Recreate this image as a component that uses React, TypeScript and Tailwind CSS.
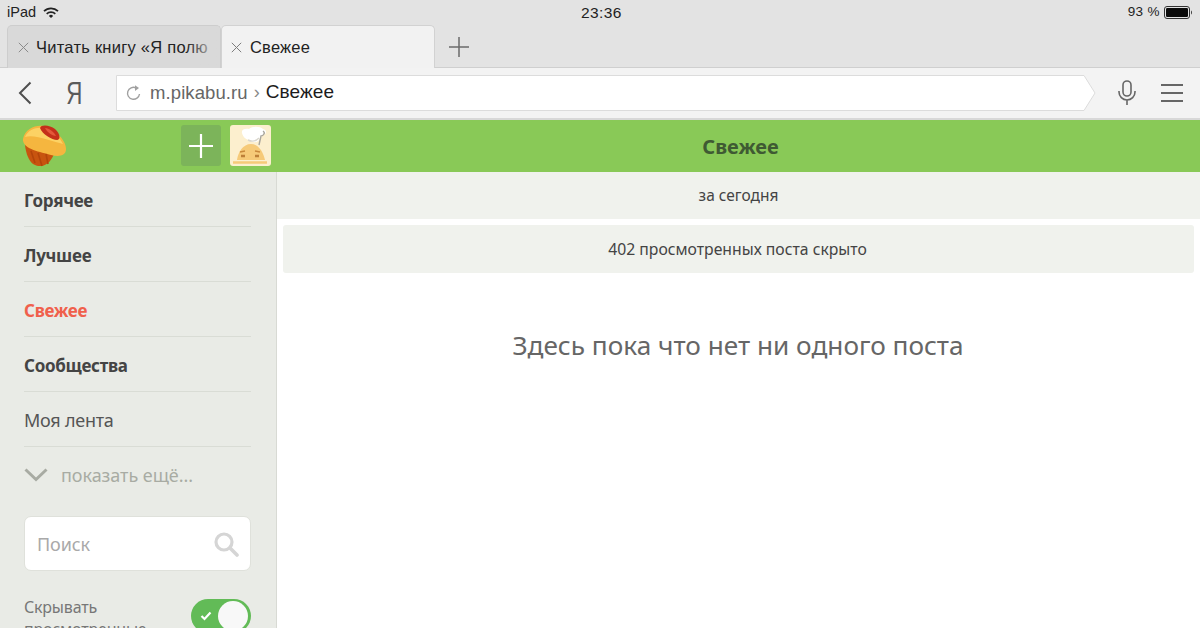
import React from "react";

const sys = { fontFamily: '"Liberation Sans", Arial, sans-serif' };

function Wifi() {
  return (
    <svg width="16" height="12" viewBox="0 0 16 12" className="ml-[7px]">
      <path d="M1 4.2 A10 10 0 0 1 15 4.2" fill="none" stroke="#222" strokeWidth="1.7" />
      <path d="M3.7 6.8 A6.2 6.2 0 0 1 12.3 6.8" fill="none" stroke="#222" strokeWidth="1.7" />
      <path d="M8 11 L5.9 8.9 A3 3 0 0 1 10.1 8.9 Z" fill="#222" />
    </svg>
  );
}

function Battery() {
  return (
    <svg width="29" height="13" viewBox="0 0 29 13" className="ml-[4px]">
      <rect x="0.5" y="0.5" width="25" height="12" rx="2.5" fill="none" stroke="#333" />
      <rect x="2" y="2" width="22" height="9" rx="1.2" fill="#0b0b0b" />
      <path d="M27 4.5 C28.2 4.8 28.2 8.2 27 8.5 Z" fill="#333" />
    </svg>
  );
}

function TabX({ c }: { c: string }) {
  return (
    <svg width="11" height="11" viewBox="0 0 11 11" className="shrink-0">
      <path d="M0.8 0.8 L10.2 10.2 M10.2 0.8 L0.8 10.2" stroke={c} strokeWidth="1" />
    </svg>
  );
}

function Muffin() {
  return (
    <svg width="44" height="42" viewBox="0 0 44 42">
      <path d="M2 20 C3 29 6 36 10 39 C16 43 26 42 31 29 Z" fill="#c8540f" />
      <path d="M8 26 L12 38 M15 28 L19 41 M23 29 L25 39" stroke="#b4450a" strokeWidth="1.6" fill="none" />
      <path d="M0 14 C2 4 12 0 20 1 C30 3 43 14 43 24 C43 31 36 32 28 30 C17 27 -1 24 0 14 Z" fill="#f5b63f" />
      <path d="M2 12 C5 5 13 2 20 3 C28 5 37 12 40 19 C30 17 12 9 2 12 Z" fill="#fcd264" />
      <path d="M17 3 C18 -1 27 0 32 4 C37 8 38 15 34 15 C29 15 19 9 17 3 Z" fill="#c4301a" />
      <path d="M22 3 C26 3 31 7 33 11 C29 11 24 7 22 3 Z" fill="#e4583a" />
    </svg>
  );
}

function Chef() {
  return (
    <div className="w-[41px] h-[41px] rounded-[3px] bg-[#fcefce] ml-[9px] overflow-hidden">
      <svg width="41" height="41" viewBox="0 0 41 41">
        <path d="M7 35 C8 27 13 19 21 19 C28 19 33 26 35 35 Z" fill="#f6ca78" />
        <path d="M3 37.5 H37" stroke="#f6ca78" strokeWidth="2.4" />
        <path d="M12 8 C11 4 16 3 19 4 C22 1 30 1 33 4 C37 5 37 9 33 10 L29 15 C27 18 22 18 20 15 C16 15 13 12 12 8 Z" fill="#ffffff" />
        <path d="M33 6 C36 8 33 11 31 11 L29 20" fill="none" stroke="#a9a69c" strokeWidth="1.4" />
        <path d="M18 15 C22 17 26 16 29 13" fill="none" stroke="#d9d6cb" strokeWidth="1.4" />
        <path d="M10 27 L15 26 M25 26 L30 27" stroke="#c9893b" strokeWidth="1.3" />
        <path d="M11 31 H15 M25 31 H29" stroke="#bd8038" strokeWidth="2.6" />
      </svg>
    </div>
  );
}

function NavItem({ label, cls }: { label: string; cls: string }) {
  return (
    <div className="h-[55px] border-b border-[#d9dcd5] flex items-center">
      <span className={cls}>{label}</span>
    </div>
  );
}

export default function App() {
  return (
    <div
      className="w-[1200px] h-[628px] overflow-hidden flex flex-col bg-white"
      style={{ fontFamily: '"Noto Sans", "Open Sans", sans-serif' }}
    >
      {/* Status bar */}
      <div className="h-[25px] bg-[#e3e3e3] flex items-center justify-between pl-[7px] pr-[7px] text-[14.5px] text-[#222] relative" style={sys}>
        <div className="flex items-center">
          <span>iPad</span>
          <Wifi />
        </div>
        <span className="absolute left-[581px] top-[1px] text-[15.5px] tracking-[0.4px]">23:36</span>
        <div className="flex items-center">
          <span className="text-[13.5px] tracking-[0.4px]">93 %</span>
          <Battery />
        </div>
      </div>

      {/* Tabs */}
      <div className="h-[43px] bg-[#e3e3e3] border-b border-[#cfcfcf] flex items-end pl-[7px]" style={sys}>
        <div className="w-[214px] h-[43px] mb-[-1px] bg-[#d9d9d9] border border-[#cdcdcd] border-b-0 rounded-t-[5px] flex items-center pl-[10px] overflow-hidden relative">
          <TabX c="#8a8a8a" />
          <span className="ml-[7px] text-[16.5px] text-[#222] whitespace-nowrap tracking-[0.25px]">Читать книгу «Я полю</span>
          <div className="absolute right-0 top-0 bottom-0 w-[34px] bg-gradient-to-r from-transparent to-[#d9d9d9]" />
        </div>
        <div className="w-[214px] h-[43px] mb-[-1px] bg-[#f2f2f2] border border-[#d2d2d2] border-b-0 rounded-t-[5px] flex items-center pl-[9px]">
          <TabX c="#7d7d7d" />
          <span className="ml-[8px] mt-[1px] text-[16.5px] text-[#222] tracking-[0.2px]">Свежее</span>
        </div>
        <svg width="22" height="22" viewBox="0 0 22 22" className="ml-[13px] mb-[9px]">
          <path d="M11 1 V21 M1 11 H21" stroke="#6b6b6b" strokeWidth="1.5" />
        </svg>
      </div>

      {/* Toolbar */}
      <div className="h-[52px] bg-[#f3f3f3] border-b-2 border-[#d8d8d8] flex items-center" style={sys}>
        <svg width="14" height="24" viewBox="0 0 14 24" className="ml-[18px] shrink-0">
          <path d="M12.5 1.5 L2 12 L12.5 22.5" fill="none" stroke="#4e4e4e" strokeWidth="2" />
        </svg>
        <span className="ml-[32px] w-[16px] text-[31px] text-[#5a5a5a] leading-none font-light scale-x-[0.72]">Я</span>
        <div className="ml-[36px] w-[970px] h-[36px] relative flex items-center pl-[10px] mt-[-1px]">
          <svg className="absolute inset-0" width="980" height="36" viewBox="0 0 980 36">
            <path d="M0.5 0.5 H968 L979 18 L968 35.5 H0.5 Z" fill="#fff" stroke="#dcdcdc" />
          </svg>
          <svg width="16" height="16" viewBox="0 0 16 16" className="relative shrink-0">
            <path d="M13.5 9 A6 6 0 1 1 10 2.8" fill="none" stroke="#a0a0a0" strokeWidth="1.4" />
            <path d="M9 0.3 L13 3 L9 6 Z" fill="#a0a0a0" />
          </svg>
          <span className="relative ml-[8px] text-[18.5px] text-[#666] tracking-[0.1px]">m.pikabu.ru</span>
          <span className="relative ml-[6px] text-[18px] text-[#888]">›</span>
          <span className="relative ml-[6px] text-[19px] text-[#1c1c1c] tracking-[0.1px]">Свежее</span>
        </div>
        <svg width="20" height="26" viewBox="0 0 20 26" className="ml-[31px] shrink-0">
          <rect x="6" y="1" width="8" height="15" rx="4" fill="none" stroke="#666" strokeWidth="1.6" />
          <path d="M2 11 V12 A8 8 0 0 0 18 12 V11 M10 20 V25" fill="none" stroke="#666" strokeWidth="1.6" />
        </svg>
        <div className="ml-[24px] w-[22px] flex flex-col gap-[6px] shrink-0">
          <div className="h-[2px] bg-[#666]" />
          <div className="h-[2px] bg-[#666]" />
          <div className="h-[2px] bg-[#666]" />
        </div>
      </div>

      {/* Green header */}
      <div className="h-[52px] bg-[#89c957] flex items-center shrink-0">
        <div className="w-[276px] flex items-center shrink-0 mt-[-1px]">
          <div className="ml-[23px]"><Muffin /></div>
          <div className="ml-[114px] w-[40px] h-[41px] rounded-[3px] bg-[#7cb45a] flex items-center justify-center">
            <svg width="24" height="24" viewBox="0 0 24 24">
              <path d="M12 0 V24 M0 12 H24" stroke="#fff" strokeWidth="2.2" />
            </svg>
          </div>
          <Chef />
        </div>
        <div className="flex-1 text-center text-[20px] font-bold text-[#3f5a33] pl-[5px] mt-[1px]">Свежее</div>
      </div>

      {/* Body */}
      <div className="flex flex-1 min-h-0">
        <aside className="w-[277px] shrink-0 bg-[#e9ebe6] border-r border-[#d8dad4] pl-[24px] pr-[25px]">
          <NavItem label="Горячее" cls="text-[17px] mt-[3px] font-bold text-[#444] tracking-[-0.3px]" />
          <NavItem label="Лучшее" cls="text-[17px] mt-[3px] font-bold text-[#444] tracking-[-0.3px]" />
          <NavItem label="Свежее" cls="text-[17px] mt-[3px] font-bold text-[#f0604c] tracking-[-0.3px]" />
          <NavItem label="Сообщества" cls="text-[17px] mt-[3px] font-bold text-[#444] tracking-[-0.3px]" />
          <NavItem label="Моя лента" cls="text-[18px] mt-[3px] text-[#555] tracking-[-0.25px]" />
          <div className="h-[55px] flex items-center">
            <svg width="24" height="14" viewBox="0 0 24 14" className="shrink-0">
              <path d="M1.5 1.5 L12 11.5 L22.5 1.5" fill="none" stroke="#a8aba3" strokeWidth="3" />
            </svg>
            <span className="ml-[13px] mt-[1px] text-[18px] text-[#a8aba3] tracking-[-0.05px]">показать ещё...</span>
          </div>
          <div className="mt-[14px] h-[55px] bg-white border border-[#dfe1db] rounded-[7px] flex items-center justify-between pl-[12px] pr-[11px]">
            <span className="text-[18px] mt-[1px] text-[#a9a9a9] tracking-[-0.1px]">Поиск</span>
            <svg width="26" height="26" viewBox="0 0 26 26">
              <circle cx="11" cy="11" r="8" fill="none" stroke="#d5d5d5" strokeWidth="3.2" />
              <path d="M17 17 L24 24" stroke="#d5d5d5" strokeWidth="3.6" strokeLinecap="round" />
            </svg>
          </div>
          <div className="mt-[27px] flex justify-between">
            <span className="text-[16px] leading-[22px] text-[#777] tracking-[-0.2px] mt-[-2px]">
              Скрывать<br />просмотренные
            </span>
            <div className="w-[60px] h-[34px] rounded-full bg-[#62bb57] relative shrink-0 mt-[1px] ml-[-40px]">
              <svg width="12" height="10" viewBox="0 0 12 10" className="absolute left-[9px] top-[12px]">
                <path d="M1.5 5 L4.5 8 L10.5 1.5" fill="none" stroke="#fff" strokeWidth="2.2" />
              </svg>
              <div className="absolute right-[3px] top-[2px] w-[30px] h-[30px] rounded-full bg-[#f8f8f8]" />
            </div>
          </div>
        </aside>

        <main className="flex-1 flex flex-col min-w-0">
          <div className="h-[47px] bg-[#f0f2ed] flex items-center justify-center text-[15.5px] text-[#444]">за сегодня</div>
          <div className="mt-[6px] mx-[6px] h-[48px] pt-[1px] pr-[2px] bg-[#f0f2ed] rounded-[3px] flex items-center justify-center text-[15.75px] text-[#444]">
            402 просмотренных поста скрыто
          </div>
          <div className="mt-[50px] text-center text-[26.2px] leading-[44px] text-[#666] pr-[1px]">Здесь пока что нет ни одного поста</div>
        </main>
      </div>
    </div>
  );
}
